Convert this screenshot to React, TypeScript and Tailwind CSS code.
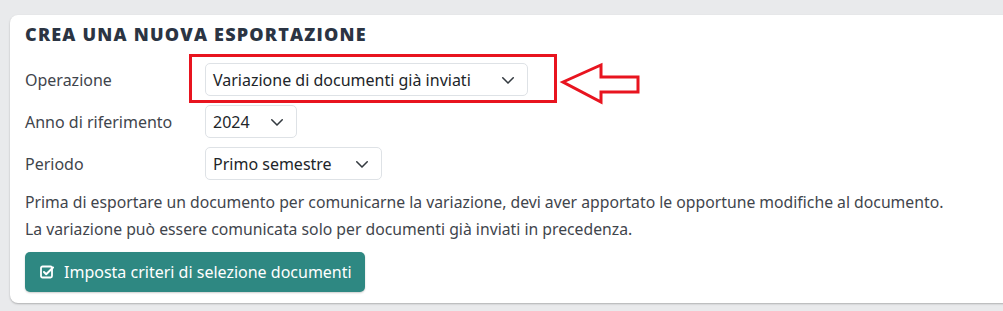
import React from "react";

function Chevron() {
  return (
    <svg width="14" height="14" viewBox="0 0 16 16" fill="none" stroke="#343a40" strokeWidth="1.8" strokeLinecap="round" strokeLinejoin="round">
      <path d="M2 5.5l6 6 6-6" />
    </svg>
  );
}

function Select({ value, w }: { value: string; w: string }) {
  return (
    <div className={`flex h-[33px] items-center justify-between rounded-[5px] border border-[#dee2e6] bg-white pl-[7px] pr-[12px] ${w}`}>
      <span className="text-[16px] leading-[20px] text-[#212529]">{value}</span>
      <Chevron />
    </div>
  );
}

export default function App() {
  return (
    <div className="h-[311px] w-[1003px] overflow-hidden bg-[#e9eaec] pl-[10px] pt-[15px]" style={{ fontFamily: '"Noto Sans", "Open Sans", sans-serif' }}>
      <div className="relative h-[288px] w-[1010px] rounded-[8px] bg-white pl-[15px] pt-[8px] shadow-[0_1px_2px_rgba(0,0,0,0.25)]">
        <h2 className="text-[18px] font-extrabold leading-[22px] tracking-[1.2px] text-[#2b3443]" style={{ fontFamily: '"Open Sans", sans-serif' }}>
          CREA UNA NUOVA ESPORTAZIONE
        </h2>
        <div className="mt-[18px] flex flex-col gap-[9px] text-[16px] leading-[20px] text-[#3f454c]">
          <div className="flex items-center">
            <div className="w-[180px]">Operazione</div>
            <Select value="Variazione di documenti già inviati" w="w-[323px]" />
          </div>
          <div className="flex items-center">
            <div className="w-[180px]">Anno di riferimento</div>
            <Select value="2024" w="w-[92px]" />
          </div>
          <div className="flex items-center">
            <div className="w-[180px]">Periodo</div>
            <Select value="Primo semestre" w="w-[177px]" />
          </div>
        </div>
        <div className="mt-[9px] text-[15.75px] leading-[27px] text-[#3f454c]">
          <p>Prima di esportare un documento per comunicarne la variazione, devi aver apportato le opportune modifiche al documento.</p>
          <p>La variazione può essere comunicata solo per documenti già inviati in precedenza.</p>
        </div>
        <button className="mt-[9px] flex h-[40px] w-[340px] items-center gap-[10px] rounded-[5px] bg-[#2e8882] pl-[15px] text-[16px] text-white shadow-[0_1px_2px_rgba(0,0,0,0.2)]">
          <svg width="14" height="14" viewBox="0 0 14 14" fill="none">
            <rect x="1" y="1.5" width="11" height="11" rx="1.5" stroke="white" strokeWidth="1.8" />
            <path d="M4 7l2.2 2.2L13 2.5" stroke="white" strokeWidth="2" strokeLinecap="round" strokeLinejoin="round" />
          </svg>
          <span>Imposta criteri di selezione documenti</span>
        </button>

        <div className="absolute left-[179px] top-[39px] h-[49px] w-[368px] border-[3px] border-[#e8141f]" />
        <svg className="absolute left-[540px] top-[40px]" width="92" height="52" viewBox="0 0 92 52" fill="none">
          <path d="M13 27 L51 10 L51 22 L88 22 L88 37 L51 37 L51 47 Z" stroke="#e8141f" strokeWidth="3" strokeLinejoin="miter" />
        </svg>
      </div>
    </div>
  );
}
